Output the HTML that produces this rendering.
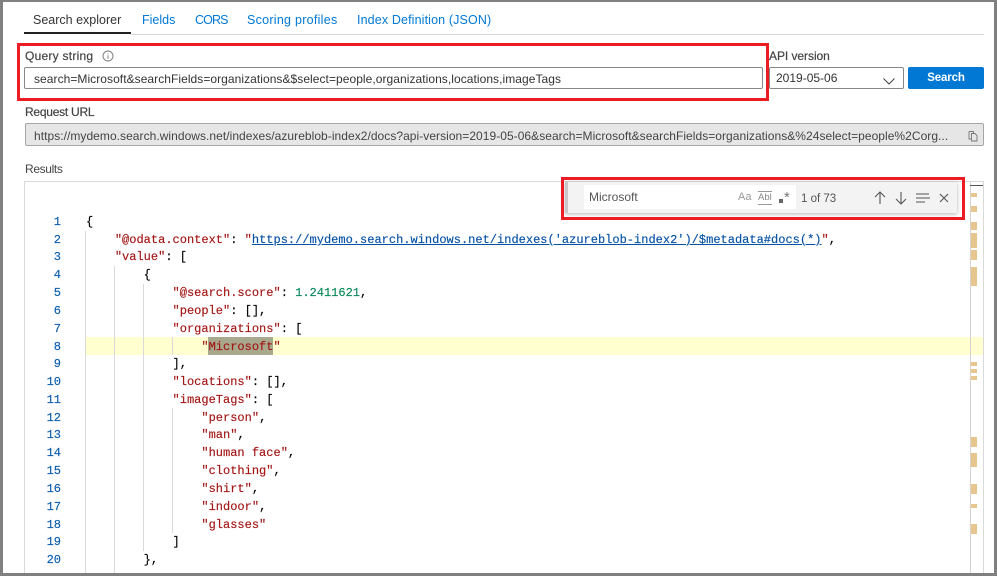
<!DOCTYPE html>
<html><head><meta charset="utf-8"><style>
html,body{margin:0;padding:0}
body{width:997px;height:576px;overflow:hidden;background:#fff;position:relative;font-family:"Liberation Sans",sans-serif;font-size:12px;color:#333}
.a{position:absolute;white-space:pre}
.t{font-size:12.5px;color:#0078d4;top:13px;line-height:15px}
.l{font-size:12px;color:#444;font-weight:400;-webkit-text-stroke:.2px #444;line-height:14px}
.box{position:absolute;box-sizing:border-box;border:1px solid #8a8886;border-radius:2px;background:#fff}
.ln{position:absolute;left:40px;width:21px;text-align:right;font:12.03px/17.8px "Liberation Mono",monospace;color:#0b5cad;-webkit-text-stroke:.15px}
.row{position:absolute;left:86px;white-space:pre;font:12.03px/17.8px "Liberation Mono",monospace;color:#000;-webkit-text-stroke:.15px}
.k{color:#a31515}.n{color:#09885a}.u{color:#0451a5;text-decoration:underline}
.g{position:absolute;width:1px;background:#d9d9d9}
.m{position:absolute;left:971px;width:6px;background:#e6c58f}
.r{position:absolute;box-sizing:border-box;border:3px solid #ed1c24}
</style></head><body>
<div class="a t" style="left:33px;color:#333">Search explorer</div>
<div class="a t" style="left:142px">Fields</div>
<div class="a t" style="left:195px;font-size:12.5px;letter-spacing:-.9px">CORS</div>
<div class="a t" style="left:247px;letter-spacing:.27px">Scoring profiles</div>
<div class="a t" style="left:357px;letter-spacing:.13px">Index Definition (JSON)</div>
<div class="a" style="left:24px;top:32px;width:107px;height:2px;background:#222"></div>
<div class="a" style="left:131px;top:34px;width:853px;height:1px;background:#d6d6d6"></div>

<div class="a l" style="left:25px;top:49px;letter-spacing:.25px">Query string</div>
<svg class="a" style="left:102px;top:50px" width="12" height="12" viewBox="0 0 12 12"><circle cx="6" cy="6" r="5" fill="none" stroke="#777" stroke-width=".9"/><path d="M6 5.2V8.8M6 3.4V4.3" stroke="#777" stroke-width=".9"/></svg>
<div class="box" style="left:24px;top:67px;width:739px;height:22px"></div>
<div class="a" style="left:34px;top:72px;font-size:12px;line-height:14px;color:#333;letter-spacing:.055px">search=Microsoft&amp;searchFields=organizations&amp;$select=people,organizations,locations,imageTags</div>

<div class="a l" style="left:769px;top:49px;letter-spacing:-.05px">API version</div>
<div class="box" style="left:769px;top:67px;width:135px;height:22px"></div>
<div class="a" style="left:776px;top:71px;font-size:12px;line-height:15px;color:#333">2019-05-06</div>
<svg class="a" style="left:882px;top:76px" width="14" height="10" viewBox="0 0 14 10"><path d="M1.5 2.5L7 8L12.500 2.500" fill="none" stroke="#444" stroke-width="1"/></svg>
<div class="a" style="left:908px;top:67px;width:76px;height:22px;background:#0078d4;border-radius:2px;color:#fff;text-align:center;font-weight:700;font-size:11.5px;letter-spacing:-.15px;line-height:22px">Search</div>

<div class="a l" style="left:25px;top:105px;letter-spacing:-.25px">Request URL</div>
<div class="box" style="left:25px;top:123px;width:959px;height:23px;background:#e6e6e6;border-color:#a6a6a6"></div>
<div class="a" style="left:34px;top:129px;font-size:12px;line-height:14px;color:#444;letter-spacing:.045px">https://mydemo.search.windows.net/indexes/azureblob-index2/docs?api-version=2019-05-06&amp;search=Microsoft&amp;searchFields=organizations&amp;%24select=people%2Corg...</div>
<svg class="a" style="left:967px;top:130px" width="12" height="12" viewBox="0 0 12 12"><path d="M2 1.500H6.500V3M2 1.500V9H4M4.500 3.500H8L10 5.500V11H4.500Z" fill="none" stroke="#777" stroke-width=".9"/></svg>

<div class="a l" style="left:25px;top:162px;-webkit-text-stroke:0;letter-spacing:-.35px">Results</div>

<div class="a" style="left:24px;top:181px;width:960px;height:395px;box-sizing:border-box;border:1px solid #d9d9d9;border-bottom:0"></div>
<div class="a" style="left:86px;top:337px;width:897px;height:18px;background:#ffffd0"></div>
<div class="a" style="left:208px;top:337px;width:65px;height:18px;background:#a8a88c"></div>
<div class="a" style="left:970px;top:182px;width:1px;height:394px;background:#d3d3d3"></div>
<div class="a" style="left:970px;top:185px;width:13px;height:1px;background:#555"></div>

<div class="g" style="left:85px;top:231px;height:345px"></div>
<div class="g" style="left:114px;top:266px;height:310px"></div>
<div class="g" style="left:143px;top:284px;height:267px"></div>
<div class="g" style="left:172px;top:337px;height:18px"></div>
<div class="g" style="left:172px;top:408px;height:125px"></div>

<div class="m" style="top:193px;height:4px"></div>
<div class="m" style="top:206px;height:6px"></div>
<div class="m" style="top:222px;height:8px"></div>
<div class="m" style="top:233px;height:15px"></div>
<div class="m" style="top:250px;height:10px"></div>
<div class="m" style="top:267px;height:19px"></div>
<div class="m" style="top:362px;height:4px"></div>
<div class="m" style="top:369px;height:4px"></div>
<div class="m" style="top:376px;height:4px"></div>
<div class="m" style="top:437px;height:10px"></div>
<div class="m" style="top:453px;height:14px"></div>
<div class="m" style="top:484px;height:10px"></div>
<div class="m" style="top:504px;height:4px"></div>
<div class="m" style="top:524px;height:10px"></div>

<div class="ln" style="top:214px">1</div><div class="row" style="top:214px">{</div>
<div class="ln" style="top:232px">2</div><div class="row" style="top:232px">    <span class="k">"@odata.context"</span>: <span class="k">"</span><span class="u">https://mydemo.search.windows.net/indexes('azureblob-index2')/$metadata#docs(*)</span><span class="k">"</span>,</div>
<div class="ln" style="top:249px">3</div><div class="row" style="top:249px">    <span class="k">"value"</span>: [</div>
<div class="ln" style="top:267px">4</div><div class="row" style="top:267px">        {</div>
<div class="ln" style="top:285px">5</div><div class="row" style="top:285px">            <span class="k">"@search.score"</span>: <span class="n">1.2411621</span>,</div>
<div class="ln" style="top:303px">6</div><div class="row" style="top:303px">            <span class="k">"people"</span>: [],</div>
<div class="ln" style="top:321px">7</div><div class="row" style="top:321px">            <span class="k">"organizations"</span>: [</div>
<div class="ln" style="top:339px">8</div><div class="row" style="top:339px">                <span class="k">"Microsoft"</span></div>
<div class="ln" style="top:356px">9</div><div class="row" style="top:356px">            ],</div>
<div class="ln" style="top:374px">10</div><div class="row" style="top:374px">            <span class="k">"locations"</span>: [],</div>
<div class="ln" style="top:392px">11</div><div class="row" style="top:392px">            <span class="k">"imageTags"</span>: [</div>
<div class="ln" style="top:410px">12</div><div class="row" style="top:410px">                <span class="k">"person"</span>,</div>
<div class="ln" style="top:427px">13</div><div class="row" style="top:427px">                <span class="k">"man"</span>,</div>
<div class="ln" style="top:445px">14</div><div class="row" style="top:445px">                <span class="k">"human face"</span>,</div>
<div class="ln" style="top:463px">15</div><div class="row" style="top:463px">                <span class="k">"clothing"</span>,</div>
<div class="ln" style="top:481px">16</div><div class="row" style="top:481px">                <span class="k">"shirt"</span>,</div>
<div class="ln" style="top:499px">17</div><div class="row" style="top:499px">                <span class="k">"indoor"</span>,</div>
<div class="ln" style="top:517px">18</div><div class="row" style="top:517px">                <span class="k">"glasses"</span></div>
<div class="ln" style="top:534px">19</div><div class="row" style="top:534px">            ]</div>
<div class="ln" style="top:552px">20</div><div class="row" style="top:552px">        },</div>

<div class="a" style="left:565px;top:182px;width:392px;height:31px;background:#f3f3f3;border-left:3px solid #c8c8c8;box-sizing:border-box;box-shadow:0 1px 4px rgba(0,0,0,.3)"></div>
<div class="a" style="left:584px;top:185px;width:212px;height:24px;background:#fff"></div>
<div class="a" style="left:589px;top:190px;font-size:12px;line-height:15px;color:#555">Microsoft</div>
<div class="a" style="left:738px;top:190px;font-size:11px;line-height:14px;color:#999">Aa</div>
<div class="a" style="left:758px;top:191px;font-size:9.500px;line-height:12px;color:#888;border-top:1px solid #999;border-bottom:1px solid #999">Abl</div>
<div class="a" style="left:779px;top:199px;width:4px;height:4px;background:#666"></div>
<div class="a" style="left:784px;top:189px;font-size:15px;line-height:18px;color:#777">*</div>
<div class="a" style="left:801px;top:192px;font-size:11.500px;line-height:14px;color:#555">1 of 73</div>
<svg class="a" style="left:872px;top:189px" width="82" height="18" viewBox="0 0 82 18"><g fill="none" stroke="#555" stroke-width="1.100"><path d="M8 15V3M3 8L8 3L13 8"/><path d="M29 3V15M24 10L29 15L34 10"/><path d="M44 5H57M44 9H58M44 13H53"/><path d="M68 5L76 13M76 5L68 13"/></g></svg>

<div class="r" style="left:17px;top:43px;width:752px;height:58px"></div>
<div class="r" style="left:561px;top:177px;width:404px;height:43px"></div>

<div class="a" style="left:0;top:0;width:997px;height:2px;background:#808080"></div>
<div class="a" style="left:0;top:0;width:3px;height:576px;background:#808080"></div>
<div class="a" style="left:994px;top:0;width:3px;height:576px;background:#808080"></div>
<div class="a" style="left:0;top:573px;width:997px;height:3px;background:#808080"></div>
</body></html>
